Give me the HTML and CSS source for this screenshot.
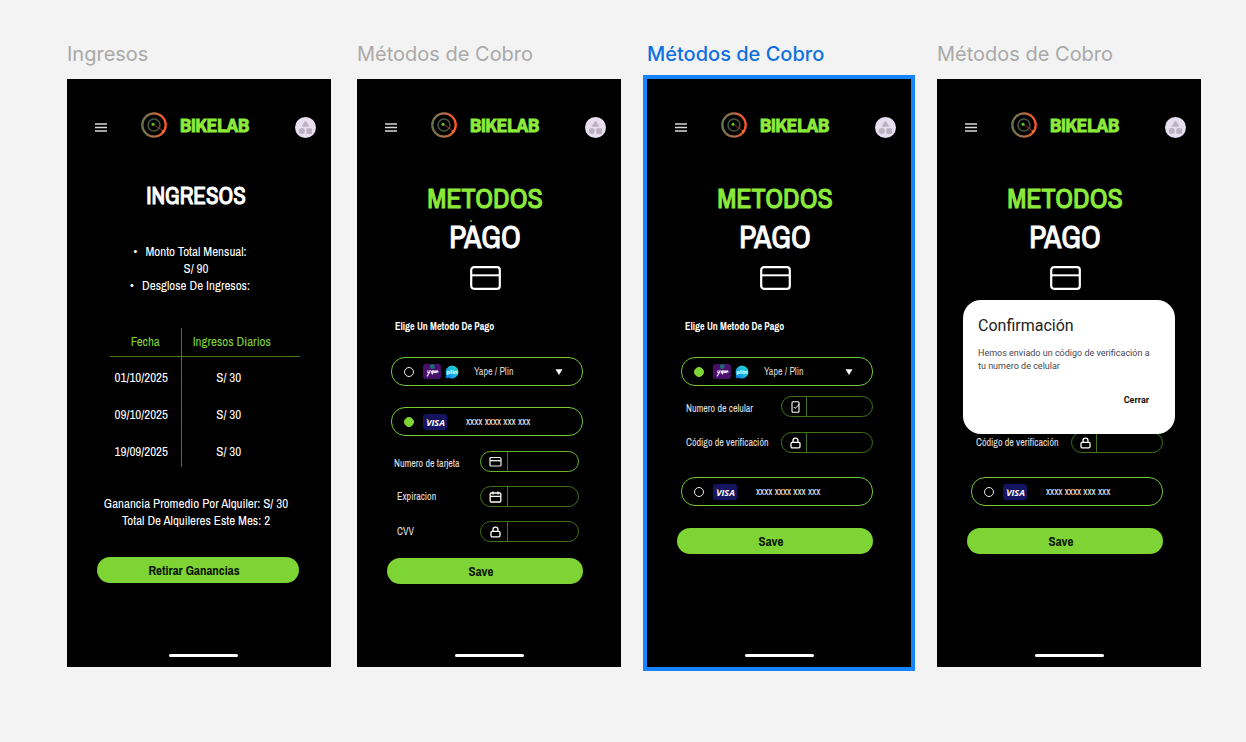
FILE: index.html
```html
<!DOCTYPE html>
<html lang="es">
<head>
<meta charset="utf-8">
<meta name="viewport" content="width=device-width, initial-scale=1">
<title>BikeLab</title>
<link rel="stylesheet" href="styles.css">
</head>
<body>
<svg class="sprite" aria-hidden="true">
  <defs>
    <linearGradient id="rim" x1="0" x2="1"><stop offset="0" stop-color="#66734e"/><stop offset=".45" stop-color="#a8704a"/><stop offset="1" stop-color="#ff5426"/></linearGradient>
    <linearGradient id="aqua" x1="0" y1="1" x2="1" y2="0"><stop offset="0" stop-color="#0a6fe8"/><stop offset=".5" stop-color="#1cb6e0"/><stop offset="1" stop-color="#20dcc0"/></linearGradient>
    <symbol id="menu" viewBox="0 0 12 9"><path d="M0 1h12M0 4.500h12M0 8h12" stroke="#d8d8d8" stroke-width="1.400"/></symbol>
    <symbol id="wheel" viewBox="0 0 26 26"><circle cx="13" cy="13" r="11.700" fill="none" stroke="url(#rim)" stroke-width="2.300"/><circle cx="13" cy="13" r="6" fill="none" stroke="#46553f" stroke-width="1.600"/><path d="M12 12l10 7" stroke="#a02f35" stroke-width=".9"/><circle cx="22" cy="19.500" r="1" fill="none" stroke="#ff9a55" stroke-width=".6"/><circle cx="12" cy="12.300" r="1.500" fill="#58d020"/></symbol>
    <symbol id="avatar" viewBox="0 0 21 21"><circle cx="10.500" cy="10.500" r="10.500" fill="#e8def0"/><path d="M10.500 4l3.200 5.200H7.300z" fill="#bdb2c2" stroke="#bdb2c2" stroke-linejoin="round"/><circle cx="6.800" cy="14" r="3" fill="#bdb2c2"/><rect x="11.300" y="11.200" width="5.800" height="5.800" rx="1.200" fill="#bdb2c2"/></symbol>
    <symbol id="card-lg" viewBox="0 0 31 24"><rect x="1.200" y="1.200" width="28.600" height="21.600" rx="2.800" fill="none" stroke="#fff" stroke-width="2.200"/><path d="M1 9.300h29" stroke="#fff" stroke-width="2"/></symbol>
    <symbol id="card" viewBox="0 0 13 12"><rect x="1" y="1.500" width="11" height="8.500" rx="1" fill="none" stroke="#eee" stroke-width="1.200"/><path d="M1 4.700h11" stroke="#eee" stroke-width="1.300"/></symbol>
    <symbol id="calendar" viewBox="0 0 13 12"><rect x="1.200" y="2" width="10.600" height="9" rx="1" fill="none" stroke="#fff" stroke-width="1.300"/><path d="M1.200 5.300h10.600M4 .4v3M9 .4v3" stroke="#fff" stroke-width="1.300"/></symbol>
    <symbol id="lock" viewBox="0 0 13 12"><rect x="2" y="5.300" width="9" height="5.500" rx="1.300" fill="none" stroke="#fff" stroke-width="1.300"/><path d="M4 5.300V3.700a2.500 2.500 0 0 1 5 0v1.600" fill="none" stroke="#fff" stroke-width="1.300"/></symbol>
    <symbol id="phone" viewBox="0 0 13 12"><rect x="3" y=".7" width="7" height="10.600" rx="1" fill="none" stroke="#fff" stroke-width="1.100"/><path d="M4.800 6l1.300 1.400L10.500 3.300" fill="none" stroke="#fff"/></symbol>
    <symbol id="yape" viewBox="0 0 18 15"><rect width="18" height="15" rx="3" fill="#49106b"/><circle cx="9.300" cy="2.600" r="2.300" fill="#12806f"/><path d="M8.200 2.600l1 1 1.500-2" fill="none" stroke="#0a4f5a" stroke-width=".6"/><path d="M5 6.300l-.2 2.200 1.700-.2L7.300 6M6.700 8.300L4 12.400M8.300 9q-.4-2.200 1.700-2.200L9.400 9zM10.800 6.500l-1.500 4M11 7.500q2-1.500 1.300.8l-1.500.3M13.200 8h1.800q0-1.500-1.400-1t-.2 2.100" fill="none" stroke="#f2e4f8" stroke-width="1.100"/></symbol>
    <symbol id="plin" viewBox="0 0 14 14"><path d="M7 .5a6.500 6.500 0 1 1-3.200 12.200L.8 13.300.9 9A6.500 6.500 0 0 1 7 .5z" fill="url(#aqua)"/><text x="7" y="8.500" text-anchor="middle" class="plin-text">plin</text></symbol>
    <symbol id="visa" viewBox="0 0 24 16"><rect width="24" height="16" rx="3" fill="#14145f"/><text x="12.500" y="12" text-anchor="middle" class="visa-text">VISA</text><path d="M3 5.200h2.300l.6 2.600z" fill="#f0a030"/></symbol>
    <symbol id="caret" viewBox="0 0 8 6"><path d="M.5 0.300h7L4 6z" fill="#fff"/></symbol>
  </defs>
</svg>

<main class="canvas">
  <section class="artboard">
    <h2 class="artboard-name">Ingresos</h2>
    <div class="screen">
      <header class="topbar">
        <button class="icon-button" aria-label="Menú"><svg class="menu"><use href="#menu"/></svg></button>
        <svg class="wheel"><use href="#wheel"/></svg>
        <span class="brand">BIKELAB</span>
        <button class="icon-button profile" aria-label="Perfil"><svg class="avatar"><use href="#avatar"/></svg></button>
      </header>
      <div class="income">
        <h1 class="income-title">INGRESOS</h1>
        <ul class="facts">
          <li>Monto Total Mensual:<br>S/ 90</li>
          <li>Desglose De Ingresos:</li>
        </ul>
        <table class="earnings">
          <thead><tr><th>Fecha</th><th>Ingresos Diarios</th></tr></thead>
          <tbody>
            <tr><td>01/10/2025</td><td>S/ 30</td></tr>
            <tr><td>09/10/2025</td><td>S/ 30</td></tr>
            <tr><td>19/09/2025</td><td>S/ 30</td></tr>
          </tbody>
        </table>
        <p class="summary">Ganancia Promedio Por Alquiler: S/ 30<br>Total De Alquileres Este Mes: 2</p>
        <button class="primary withdraw">Retirar Ganancias</button>
      </div>
      <div class="home-bar home-bar-income"></div>
    </div>
  </section>

  <section class="artboard">
    <h2 class="artboard-name">Métodos de Cobro</h2>
    <div class="screen">
      <header class="topbar">
        <button class="icon-button" aria-label="Menú"><svg class="menu"><use href="#menu"/></svg></button>
        <svg class="wheel"><use href="#wheel"/></svg>
        <span class="brand">BIKELAB</span>
        <button class="icon-button profile" aria-label="Perfil"><svg class="avatar"><use href="#avatar"/></svg></button>
      </header>
      <h1 class="pay-title"><span class="accent">METODOS</span><span class="pago dotted">PAGO</span></h1>
      <svg class="card-lg"><use href="#card-lg"/></svg>
      <form class="pay-form">
        <p class="prompt">Elige Un Metodo De Pago</p>
        <div class="option">
          <input class="radio" type="radio" name="m2" aria-label="Yape / Plin">
          <svg class="yape"><use href="#yape"/></svg><svg class="plin"><use href="#plin"/></svg>
          <select class="wallet" aria-label="Billetera"><option>Yape / Plin</option></select>
          <svg class="caret"><use href="#caret"/></svg>
        </div>
        <div class="option option-second">
          <input class="radio" type="radio" name="m2" id="visa2" checked>
          <svg class="visa"><use href="#visa"/></svg>
          <label class="card-number" for="visa2">xxxx xxxx xxx xxx</label>
        </div>
        <div class="fields card-fields">
          <div class="row row-low"><label for="num">Numero de tarjeta</label><div class="field bright"><svg><use href="#card"/></svg><input id="num" type="text"></div></div>
          <div class="row row-inset"><label for="exp">Expiracion</label><div class="field"><svg><use href="#calendar"/></svg><input id="exp" type="text"></div></div>
          <div class="row row-inset"><label for="cvv">CVV</label><div class="field"><svg><use href="#lock"/></svg><input id="cvv" type="text"></div></div>
        </div>
        <button class="primary save save-card" type="button">Save</button>
      </form>
      <div class="home-bar"></div>
    </div>
  </section>

  <section class="artboard selected">
    <h2 class="artboard-name">Métodos de Cobro</h2>
    <div class="screen">
      <header class="topbar">
        <button class="icon-button" aria-label="Menú"><svg class="menu"><use href="#menu"/></svg></button>
        <svg class="wheel"><use href="#wheel"/></svg>
        <span class="brand">BIKELAB</span>
        <button class="icon-button profile" aria-label="Perfil"><svg class="avatar"><use href="#avatar"/></svg></button>
      </header>
      <h1 class="pay-title"><span class="accent">METODOS</span><span class="pago">PAGO</span></h1>
      <svg class="card-lg"><use href="#card-lg"/></svg>
      <form class="pay-form">
        <p class="prompt">Elige Un Metodo De Pago</p>
        <div class="option">
          <input class="radio" type="radio" name="m3" aria-label="Yape / Plin" checked>
          <svg class="yape"><use href="#yape"/></svg><svg class="plin"><use href="#plin"/></svg>
          <select class="wallet" aria-label="Billetera"><option>Yape / Plin</option></select>
          <svg class="caret"><use href="#caret"/></svg>
        </div>
        <div class="fields phone-fields">
          <div class="row row-low"><label for="cel3">Numero de celular</label><div class="field"><svg><use href="#phone"/></svg><input id="cel3" type="text"></div></div>
          <div class="row"><label for="cod3">Código de verificación</label><div class="field"><svg><use href="#lock"/></svg><input id="cod3" type="text"></div></div>
        </div>
        <div class="option option-last">
          <input class="radio" type="radio" name="m3" id="visa3">
          <svg class="visa"><use href="#visa"/></svg>
          <label class="card-number" for="visa3">xxxx xxxx xxx xxx</label>
        </div>
        <button class="primary save" type="button">Save</button>
      </form>
      <div class="home-bar"></div>
    </div>
  </section>

  <section class="artboard">
    <h2 class="artboard-name">Métodos de Cobro</h2>
    <div class="screen">
      <header class="topbar">
        <button class="icon-button" aria-label="Menú"><svg class="menu"><use href="#menu"/></svg></button>
        <svg class="wheel"><use href="#wheel"/></svg>
        <span class="brand">BIKELAB</span>
        <button class="icon-button profile" aria-label="Perfil"><svg class="avatar"><use href="#avatar"/></svg></button>
      </header>
      <h1 class="pay-title"><span class="accent">METODOS</span><span class="pago">PAGO</span></h1>
      <svg class="card-lg"><use href="#card-lg"/></svg>
      <form class="pay-form covered">
        <div class="fields phone-fields">
          <div class="row"><label for="cod4">Código de verificación</label><div class="field"><svg><use href="#lock"/></svg><input id="cod4" type="text"></div></div>
        </div>
        <div class="option option-last">
          <input class="radio" type="radio" name="m4" id="visa4">
          <svg class="visa"><use href="#visa"/></svg>
          <label class="card-number" for="visa4">xxxx xxxx xxx xxx</label>
        </div>
        <button class="primary save" type="button">Save</button>
      </form>
      <div class="home-bar"></div>
      <dialog class="confirm" open aria-labelledby="confirm-title">
        <h3 id="confirm-title">Confirmación</h3>
        <p>Hemos enviado un código de verificación a tu numero de celular</p>
        <button class="close">Cerrar</button>
      </dialog>
    </div>
  </section>
</main>
</body>
</html>
```
FILE: styles.css
```css
* { box-sizing: border-box; margin: 0; padding: 0; }
body {
  min-height: 100vh;
  background: #f3f3f3;
  color: #fff;
  font-family: "Archivo Narrow", "Liberation Sans Narrow", "Arial Narrow", "Liberation Sans", sans-serif;
}
button, input, select { font: inherit; color: inherit; background: none; border: 0; }
svg { display: block; flex: none; }
.sprite { position: absolute; width: 0; height: 0; }

.canvas {
  display: grid;
  grid-template-columns: repeat(4, minmax(264px, 1fr));
  gap: 26px;
  padding: 40px 46px 75px 67px;
}
.artboard { display: flex; flex-direction: column; }
.artboard-name {
  font: 400 20px/28px Inter, sans-serif;
  color: #a9a9a9;
  margin-bottom: 11px;
}
.selected .artboard-name { color: #1070e0; font-weight: 500; }
.screen {
  position: relative;
  flex: 1;
  display: flex;
  flex-direction: column;
  padding: 33px 0 10px;
  background: #000;
}
.selected .screen { box-shadow: 0 0 0 4px #1684ff; }

.topbar { display: flex; align-items: center; height: 30px; padding: 0 15px 0 28px; }
.icon-button { flex: none; }
.menu { width: 12px; height: 9px; }
.wheel { width: 26px; height: 26px; margin: 0 13px 4px 34px; }
.brand {
  margin-bottom: 4px;
  font-size: 19px;
  line-height: 26px;
  font-weight: 700;
  color: #8bea3a;
  -webkit-text-stroke: 1px #8bea3a;
}
.profile { margin-left: auto; }
.avatar { width: 21px; height: 21px; }

.income { padding: 0 6px 0 0; text-align: center; }
.income-title { margin-top: 40px; font-size: 23px; line-height: 28px; font-weight: 400; -webkit-text-stroke: 1px #fff; }
.facts { margin-top: 33px; list-style: none; font-size: 13px; line-height: 17px; }
.facts li::before { content: "•"; display: inline-block; width: 12px; margin-left: -12px; text-align: left; }
.earnings {
  margin: 34px 31px 0 43px;
  width: calc(100% - 68px);
  border-collapse: collapse;
  table-layout: fixed;
  font-size: 13px;
}
.earnings th { height: 28px; font-weight: 400; color: #7ed335; border-bottom: 1px solid #467c1d; }
.earnings td { height: 37px; padding-top: 5px; }
.earnings th:first-child { width: 71px; }
.earnings tr > :first-child { border-right: 1px solid #467c1d; }
.earnings td:first-child { padding-right: 8px; }
.earnings th:last-child { padding-right: 18px; }
.earnings td:last-child { padding-right: 24px; }
.summary { margin-top: 28px; font-size: 13px; line-height: 17px; }

.primary {
  display: block;
  height: 26px;
  border-radius: 13px;
  background: #7ed335;
  color: #0a1200;
  font-size: 13px;
  font-weight: 700;
}
.withdraw { width: calc(100% - 56px); margin: 28px 0 0 30px; padding-right: 8px; }
.home-bar { align-self: center; width: 69px; height: 3px; border-radius: 2px; background: #fff; margin-top: auto; }
.home-bar-income { margin: 71px 0 0 8px; }

.pay-title { margin: 37px 8px 0 0; text-align: center; font-weight: 400; line-height: 39px; }
.pay-title span { display: block; }
.accent { font-size: 28px; color: #8bea3a; -webkit-text-stroke: 1px #8bea3a; }
.pago { position: relative; font-size: 31px; -webkit-text-stroke: 1px #fff; }
.dotted::before {
  content: "";
  position: absolute;
  top: 2px;
  left: 44%;
  width: 2px;
  height: 2px;
  background: #3f9a20;
}
.card-lg { align-self: center; width: 31px; height: 24px; margin: 9px 7px 0 0; }

.pay-form { padding: 29px 38px 0 34px; font-size: 10px; }
.covered { padding-top: 132px; }
.prompt { padding: 1px 0 0 4px; font-weight: 700; line-height: 14px; margin-bottom: 23px; }
.option {
  display: flex;
  align-items: center;
  height: 29px;
  padding: 0 19px 0 12px;
  border: 1px solid #77c832;
  border-radius: 14px;
}
.option-second { margin-top: 21px; }
.option-last { margin-top: 24px; }
.radio {
  appearance: none;
  flex: none;
  width: 10px;
  height: 10px;
  margin-right: 9px;
  border: 1px solid #eee;
  border-radius: 50%;
}
.radio:checked { background: #7ed335; border-color: #7ed335; }
.yape { width: 18px; height: 15px; }
.plin { width: 14px; height: 14px; margin: 0 15px 0 4px; }
.wallet { appearance: none; flex: 1; min-width: 0; color: #d5d5d5; }
.wallet option { color: #000; }
.caret { width: 8px; height: 6px; }
.visa { width: 24px; height: 16px; margin-right: 19px; }
.visa-text { font: italic 700 9px "Open Sans", sans-serif; fill: #fff; }
.plin-text { font: 700 6px "Open Sans", sans-serif; fill: #fff; }
.card-number { color: #eee; }

.fields { display: grid; color: #e2e2e2; }
.row { display: flex; align-items: center; justify-content: space-between; }
.row-low label { padding-top: 4px; }
.row-inset { padding-left: 3px; }
.card-fields { gap: 14px; margin-top: 15px; padding: 0 4px 0 3px; }
.card-fields .field { width: 99px; }
.phone-fields { gap: 15px; margin-top: 10px; padding-left: 5px; }
.phone-fields .field { width: 92px; }
.field {
  display: flex;
  align-items: center;
  height: 21px;
  border: 1px solid #417419;
  border-radius: 11px;
}
.bright { border-color: #69b42b; }
.field svg { width: 13px; height: 12px; margin: 0 5px 0 8px; }
.phone-fields .field svg { margin: 0 4px 0 7px; }
.field input { flex: 1; min-width: 0; height: 100%; padding: 0 6px; border-left: 1px solid #417419; }
.save { width: calc(100% + 4px); margin: 22px 0 0 -4px; padding-right: 8px; }
.save-card { margin-top: 16px; }

.confirm {
  position: absolute;
  top: 221px;
  left: 26px;
  right: 26px;
  width: auto;
  margin: 0;
  padding: 15px 15px 27px;
  border: 0;
  border-radius: 18px;
  background: #fff;
  color: #222;
  font-family: Roboto, sans-serif;
}
.confirm h3 { font-size: 16px; line-height: 22px; font-weight: 400; }
.confirm p { margin: 10px 3px 0 0; font-size: 9px; line-height: 13px; color: #49454f; }
.close { display: block; margin: 20px 11px 0 auto; font-size: 9px; line-height: 14px; font-weight: 700; color: #111; }
```
